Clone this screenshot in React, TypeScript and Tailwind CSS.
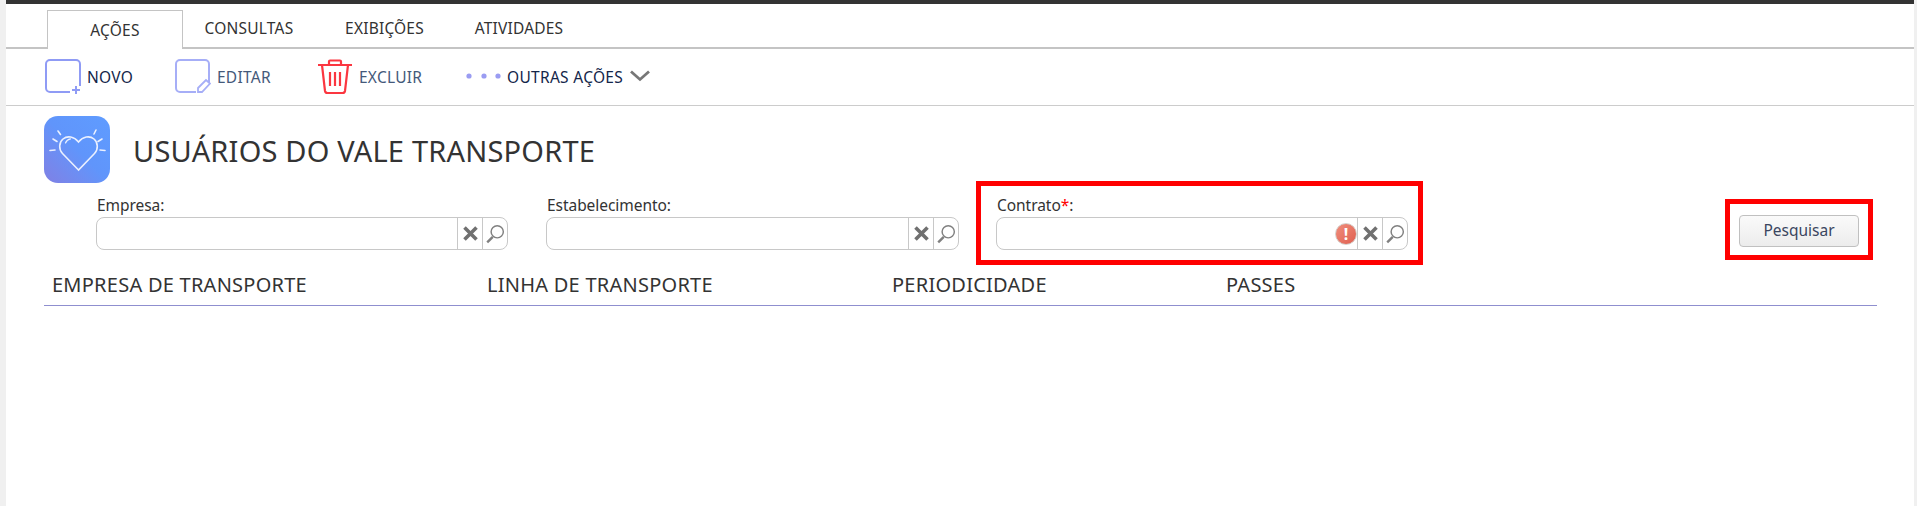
import type { ReactNode } from 'react'

const TABS = [
  { label: 'CONSULTAS', width: 'w-[132px]' },
  { label: 'EXIBIÇÕES', width: 'w-[139px]' },
  { label: 'ATIVIDADES', width: 'w-[130px]' },
]

function NewIcon() {
  return (
    <svg width="36" height="36" viewBox="0 0 36 36" fill="none">
      <path d="M25 33H5a4 4 0 0 1-4-4V5a4 4 0 0 1 4-4h26a4 4 0 0 1 4 4v22" stroke="#8f9bf5" strokeWidth="2" />
      <path d="M31 27v8M27 31h8" stroke="#8f9bf5" strokeWidth="2" />
    </svg>
  )
}

function EditIcon() {
  return (
    <svg width="36" height="36" viewBox="0 0 36 36" fill="none">
      <path d="M21 33H5a4 4 0 0 1-4-4V5a4 4 0 0 1 4-4h25a4 4 0 0 1 4 4v19" stroke="#a6aef7" strokeWidth="2" />
      <path d="M23 29l8-8 4 3.500-8 8.500h-4z" stroke="#a6aef7" strokeWidth="1.800" />
    </svg>
  )
}

function TrashIcon() {
  return (
    <svg width="36" height="36" viewBox="0 0 36 36" fill="none" stroke="#fb3640" strokeWidth="2.200">
      <path d="M1 6h34" />
      <path d="M12 6V2.500a1 1 0 0 1 1-1h10a1 1 0 0 1 1 1V6" />
      <path d="M5 6l3 26a2.500 2.500 0 0 0 2.500 2h15a2.500 2.500 0 0 0 2.500-2l3-26" />
      <path d="M13 13v14M18 13v14M23 13v14" />
    </svg>
  )
}

function HeartBadge() {
  return (
    <div className="h-[67px] w-[66px] shrink-0 rounded-[14px] bg-gradient-to-tr from-[#7f80e4] via-[#6095fb] to-[#5f9cff]">
      <svg width="66" height="67" viewBox="0 0 66 67" fill="none" stroke="#eaf0ff" strokeWidth="1.600" strokeLinecap="round">
        <path d="M34.500 54L18.500 37.500c-4-4.300-3.600-11 .5-14.500 4.500-3.700 11-2.500 15.500 3 4.500-5.500 11-6.700 15.500-3 4.100 3.500 4.500 10.200 .5 14.500z" />
        <path d="M21.500 27c.8-2 2.600-3.700 5-4.200" strokeWidth="1.200" />
        <path d="M14 15l2.500 3.500M52 14l-2 4M9 23l4 2.500M58 23l-4 2.500M6 34.500l5-.5M56 34l5 .5" />
      </svg>
    </div>
  )
}

function ToolbarItem({ icon, label, width, color }: { icon: ReactNode; label: string; width: string; color: string }) {
  return (
    <div className={`flex items-center gap-[6px] ${width}`}>
      {icon}
      <span className={`pt-[2px] text-[15.5px] tracking-[0.25px] ${color}`}>{label}</span>
    </div>
  )
}

function ClearIcon() {
  return (
    <svg width="17" height="17" viewBox="0 0 17 17" stroke="#707070" strokeWidth="3.600">
      <path d="M2.500 2.500l12 12M14.500 2.500l-12 12" />
    </svg>
  )
}

function SearchIcon() {
  return (
    <svg width="20" height="20" viewBox="0 0 18 18" fill="none" stroke="#808080">
      <circle cx="11" cy="7" r="5.500" strokeWidth="1.300" />
      <path d="M7 11.500L2 16.500" strokeWidth="2.200" />
    </svg>
  )
}

function LookupInput({ width, error }: { width: string; error?: boolean }) {
  return (
    <div className={`flex h-[33px] items-stretch rounded-[8px] border border-[#c8c8c8] bg-white ${width}`}>
      <div className="flex flex-1 items-center justify-end">
        {error && (
          <span className="flex h-[22px] w-[22px] items-center justify-center rounded-full border border-[#d5d0cc] bg-gradient-to-br from-[#f08d7c] to-[#df5f50] text-[16px] font-bold leading-none text-white">
            !
          </span>
        )}
      </div>
      <button className="flex w-[25px] items-center justify-center border-l border-[#c8c8c8]">
        <ClearIcon />
      </button>
      <button className="flex w-[25px] items-center justify-center border-l border-[#c8c8c8]">
        <SearchIcon />
      </button>
    </div>
  )
}

function Label({ children }: { children: ReactNode }) {
  return <div className="-mt-[2px] h-[22px] pl-[1px] text-[15.5px] leading-5 tracking-[-0.05px] text-[#333]">{children}</div>
}

export default function App() {
  return (
    <div className="flex h-[506px] bg-white font-['Noto_Sans',sans-serif]">
      <div className="w-[6px] shrink-0 bg-[#f0f0f0]" />

      <main className="flex min-w-0 flex-1 flex-col">
        <div className="h-1 bg-[#333]" />

        <nav className="flex h-[45px] items-end border-b-2 border-[#c4c4c4] pl-[41px]">
          <div className="-mb-[2px] flex h-[39px] w-[136px] items-center justify-center border border-b-0 border-[#c4c4c4] bg-white pt-[2px] text-[15.5px] tracking-[0.2px] text-[#333]">
            AÇÕES
          </div>
          {TABS.map((tab) => (
            <div key={tab.label} className={`flex h-[38px] items-center justify-center pt-[2px] text-[15.5px] tracking-[0.2px] text-[#333] ${tab.width}`}>
              {tab.label}
            </div>
          ))}
        </nav>

        <div className="flex h-[57px] items-center border-b border-[#ccc] pl-[39px]">
          <ToolbarItem icon={<NewIcon />} label="NOVO" width="w-[130px]" color="text-[#14264a]" />
          <ToolbarItem icon={<EditIcon />} label="EDITAR" width="w-[142px]" color="text-[#44597a]" />
          <ToolbarItem icon={<TrashIcon />} label="EXCLUIR" width="w-[148px]" color="text-[#44597a]" />
          <div className="flex items-center">
            <svg className="-mt-[3px]" width="38" height="8" viewBox="0 0 38 8" fill="#9a9cf2">
              <circle cx="4" cy="4" r="2.600" />
              <circle cx="19" cy="4" r="2.600" />
              <circle cx="33" cy="4" r="2.600" />
            </svg>
            <span className="ml-[4px] pt-[2px] text-[15.5px] tracking-[0.3px] text-[#14264a]">OUTRAS AÇÕES</span>
            <svg className="ml-[7px] -mt-[2px]" width="20" height="12" viewBox="0 0 20 12" fill="none" stroke="#777" strokeWidth="2.800">
              <path d="M1 1.500l9 8 9-8" />
            </svg>
          </div>
        </div>

        <header className="flex items-center pl-[38px] pt-[10px]">
          <HeartBadge />
          <h1 className="ml-[23px] pt-[3px] text-[29px] tracking-[0.2px] text-[#333]">USUÁRIOS DO VALE TRANSPORTE</h1>
        </header>

        <section className="-mt-[2px] flex items-start">
          <div className="ml-[90px] pt-4">
            <Label>Empresa:</Label>
            <LookupInput width="w-[412px]" />
          </div>
          <div className="ml-[38px] pt-4">
            <Label>Estabelecimento:</Label>
            <LookupInput width="w-[413px]" />
          </div>
          <div className="ml-[17px] border-[5px] border-[#f00] pb-[10px] pl-[15px] pr-[10px] pt-[11px]">
            <Label>
              Contrato<span className="text-[#f00]">*</span>:
            </Label>
            <LookupInput width="w-[412px]" error />
          </div>
          <div className="ml-auto mr-[41px] mt-[18px] border-[5px] border-[#f00] pb-[8px] pl-[9px] pr-[9px] pt-[11px]">
            <button className="h-[32px] w-[120px] rounded-[4px] border border-[#c0c0c0] bg-gradient-to-b from-[#fafafa] to-[#ececec] text-[15.5px] text-[#3a4660]">
              Pesquisar
            </button>
          </div>
        </section>

        <div className="ml-[38px] mr-[37px] grid h-[41px] grid-cols-[435px_405px_334px_1fr] items-center border-b border-[#8f8fcf] pl-[8px] text-[20px] tracking-[0.25px] text-[#333]">
          <span>EMPRESA DE TRANSPORTE</span>
          <span>LINHA DE TRANSPORTE</span>
          <span>PERIODICIDADE</span>
          <span>PASSES</span>
        </div>
      </main>

      <div className="w-[3px] shrink-0 bg-[#f0f0f0]" />
    </div>
  )
}
